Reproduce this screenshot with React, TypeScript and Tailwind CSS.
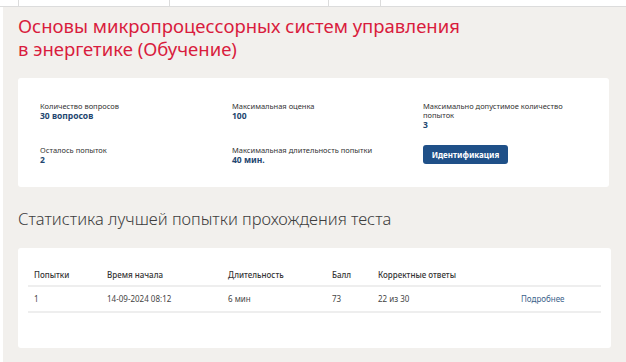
import React from "react";

const font = { fontFamily: '"Noto Sans", "Open Sans", sans-serif' };

function Field({ label, value }: { label: React.ReactNode; value: string }) {
  return (
    <div className="flex flex-col">
      <div className="text-[7.5px] leading-[9px] text-[#333]">{label}</div>
      <div className="text-[8.5px] leading-[10px] font-bold text-[#23466f]">{value}</div>
    </div>
  );
}

export default function App() {
  return (
    <div className="w-[626px] h-[362px] bg-white overflow-hidden flex flex-col" style={font}>
      <div className="h-[7px] flex border-b border-[#dcdcdc] shrink-0">
        <div className="w-[19px] border-r border-[#dcdcdc]" />
        <div className="w-[151px] border-r border-[#dcdcdc]" />
        <div className="w-[159px] border-r border-[#dcdcdc]" />
        <div className="w-[52px] border-r border-[#dcdcdc]" />
      </div>
      <div className="flex-1 ml-[3px] bg-[#f2f0ed] px-[15px] flex flex-col">
        <h1 className="mt-[7px] text-[18.5px] leading-[23px] text-[#d91c3d]" style={{ fontFamily: '"Noto Sans", sans-serif' }}>
          Основы микропроцессорных систем управления
          <br />в энергетике (Обучение)
        </h1>
        <div className="mt-[18px] w-[591px] h-[109px] bg-white rounded-[3px] px-[22px] pt-[24px] grid grid-cols-[192px_191px_1fr] grid-rows-[44px_auto]">
          <Field label="Количество вопросов" value="30 вопросов" />
          <Field label="Максимальная оценка" value="100" />
          <Field label={<>Максимально допустимое количество<br />попыток</>} value="3" />
          <Field label="Осталось попыток" value="2" />
          <Field label="Максимальная длительность попытки" value="40 мин." />
          <div className="flex items-start">
            <button className="mt-[-1px] w-[85px] h-[19px] rounded-[3px] bg-[#1f5088] text-white text-[8px] font-bold">
              Идентификация
            </button>
          </div>
        </div>
        <h2 className="mt-[20px] text-[16.5px] leading-[24px] font-light text-[#3d3d3d]">
          Статистика лучшей попытки прохождения теста
        </h2>
        <div className="mt-[17px] w-[593px] h-[100px] bg-white rounded-[3px] px-[10px] pt-[17px]">
          <div className="grid grid-cols-[73px_121px_104px_46px_143px_1fr] text-[8px] text-[#333] font-medium h-[22px] items-center border-b-2 border-[#eeeeee] px-[6px]">
            <div>Попытки</div>
            <div>Время начала</div>
            <div>Длительность</div>
            <div>Балл</div>
            <div>Корректные ответы</div>
            <div />
          </div>
          <div className="grid grid-cols-[73px_121px_104px_46px_143px_1fr] text-[8px] text-[#444] h-[26px] items-center border-b-2 border-[#eeeeee] px-[6px]">
            <div>1</div>
            <div>14-09-2024 08:12</div>
            <div>6 мин</div>
            <div>73</div>
            <div>22 из 30</div>
            <div className="text-[#3b5f8a]">Подробнее</div>
          </div>
        </div>
      </div>
    </div>
  );
}
